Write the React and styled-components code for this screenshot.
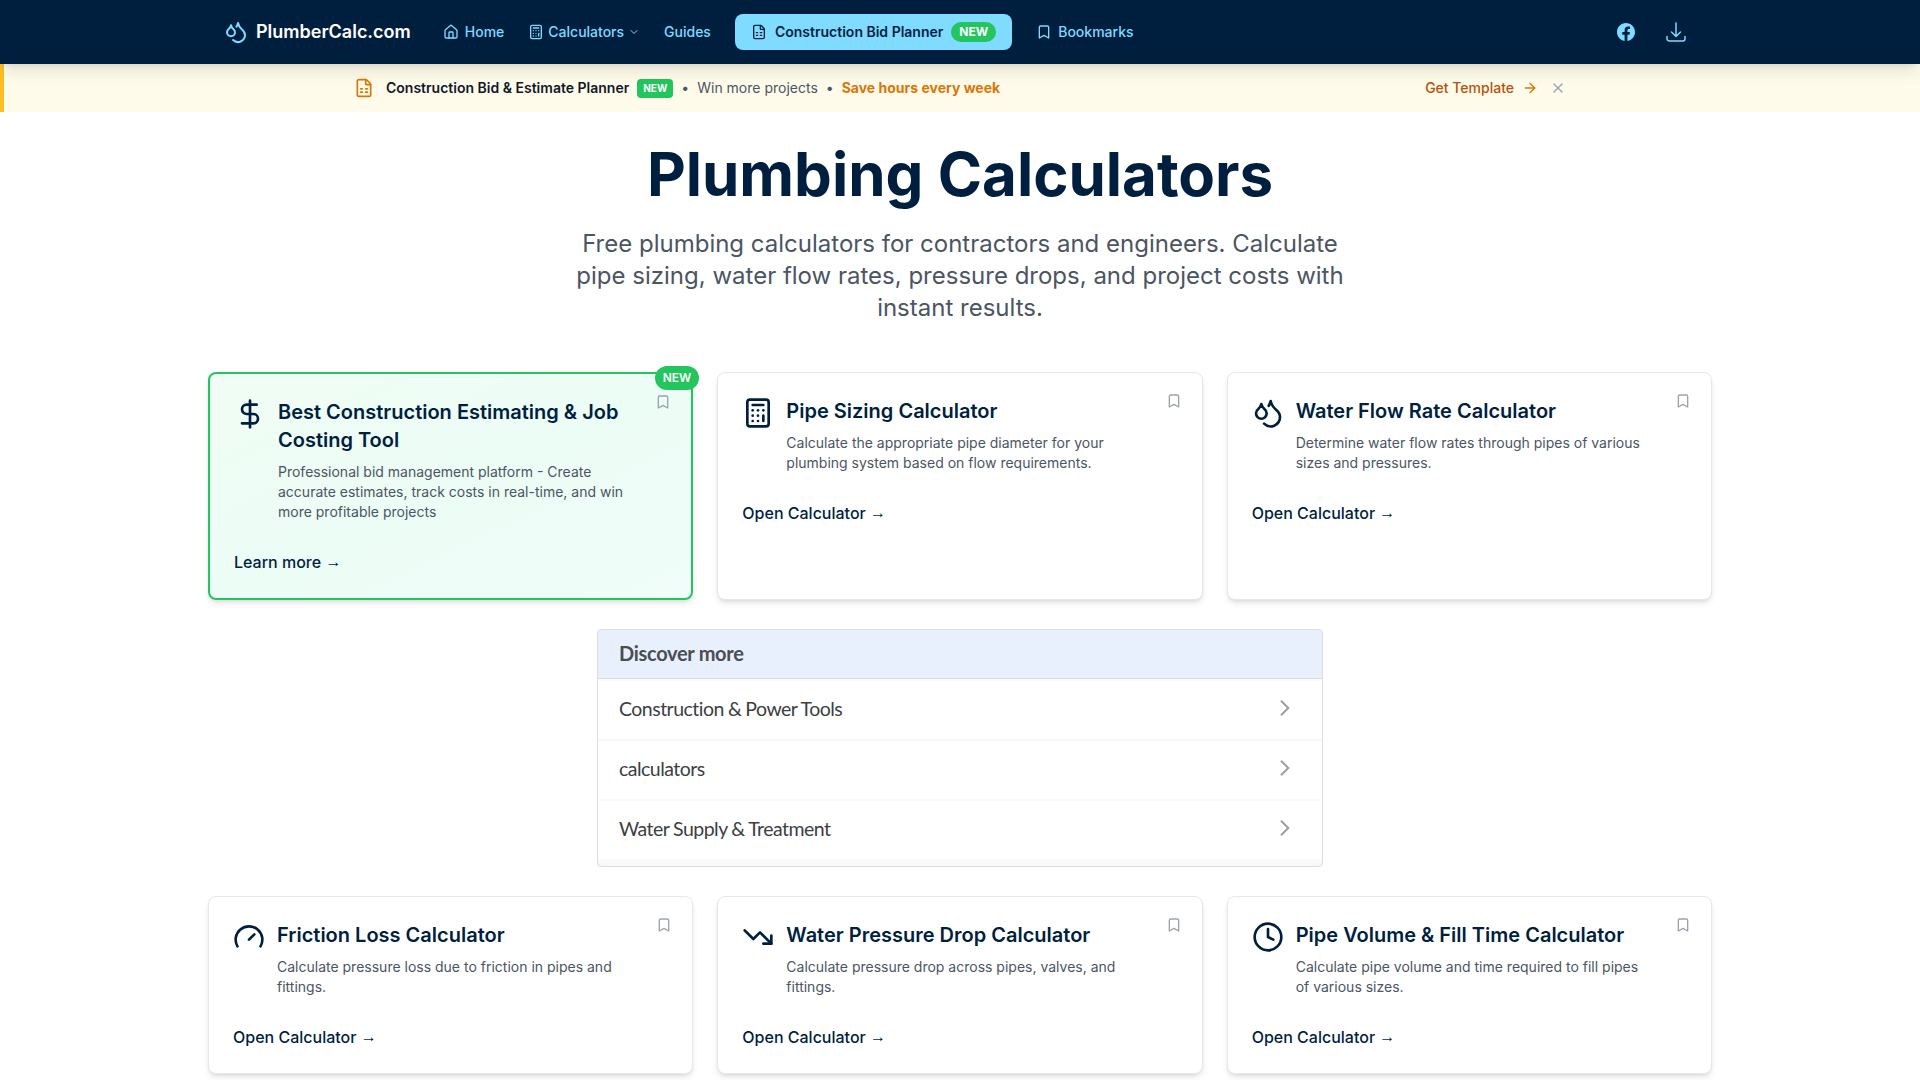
import styled, { createGlobalStyle } from "styled-components";
import {
  ArrowRight,
  Bookmark,
  Calculator,
  ChevronDown,
  Clock,
  DollarSign,
  Droplets,
  FileSpreadsheet,
  House,
  TrendingDown,
  X,
} from "lucide-react";

const GlobalStyle = createGlobalStyle`
  *, *::before, *::after {
    box-sizing: border-box;
  }

  body {
    margin: 0;
    background: #ffffff;
    font-family: Inter, "Liberation Sans", sans-serif;
    font-size: 16px;
    line-height: 24px;
    overflow: hidden;
  }

  h1, h2, h3, p {
    margin: 0;
  }

  svg {
    display: block;
    flex-shrink: 0;
  }
`;

const Header = styled.header`
  position: relative;
  z-index: 2;
  height: 64px;
  background: #001f3f;
  box-shadow: 0 10px 15px -3px rgba(0, 0, 0, 0.1), 0 4px 6px -4px rgba(0, 0, 0, 0.1);
`;

const HeaderInner = styled.div`
  width: 1536px;
  height: 100%;
  margin: 0 auto;
  padding: 0 40px 0 32px;
  display: flex;
  align-items: center;
  justify-content: space-between;
`;

const Nav = styled.nav`
  display: flex;
  align-items: center;
  gap: 24px;
`;

const Logo = styled.a`
  display: flex;
  align-items: center;
  gap: 8px;
  margin-right: 8px;
  color: #ffffff;
  font-size: 18px;
  font-weight: 600;
  line-height: 28px;

  svg {
    color: #7fdbff;
  }
`;

const NavLink = styled.a`
  display: flex;
  align-items: center;
  gap: ${(props) => props.$gap || "6px"};
  color: #7fdbff;
  font-size: 14px;
  font-weight: 500;
  line-height: 20px;
`;

const PlannerLink = styled.a`
  height: 36px;
  padding: 0 16px;
  display: flex;
  align-items: center;
  gap: 8px;
  border-radius: 8px;
  background: #7fdbff;
  color: #001f3f;
  font-size: 14px;
  font-weight: 600;
  line-height: 20px;
  box-shadow: 0 1px 2px rgba(0, 0, 0, 0.1);
`;

const NavBadge = styled.span`
  padding: 2px 8px;
  border-radius: 10px;
  background: #22c55e;
  color: #ffffff;
  font-size: 12px;
  font-weight: 700;
  line-height: 16px;
`;

const Social = styled.div`
  display: flex;
  align-items: center;
  gap: 29px;
  color: #7fdbff;
`;

const Banner = styled.div`
  height: 48px;
  border-left: 4px solid #fbbf24;
  background: #fffbeb;
`;

const BannerInner = styled.div`
  width: 1216px;
  height: 100%;
  margin: 0 auto;
  display: flex;
  align-items: center;
  justify-content: space-between;
  font-size: 14px;
  line-height: 20px;
`;

const BannerText = styled.div`
  display: flex;
  align-items: center;
  gap: 8px;
  color: #4b5563;

  svg {
    margin-right: 4px;
    color: #d97706;
  }
  strong {
    color: #111827;
    font-weight: 600;
  }
  em {
    color: #d97706;
    font-style: normal;
    font-weight: 700;
  }
`;

const BannerBadge = styled.span`
  padding: 2px 6px;
  border-radius: 4px;
  background: #22c55e;
  color: #ffffff;
  font-size: 10px;
  font-weight: 700;
  line-height: 15px;
`;

const BannerActions = styled.div`
  display: flex;
  align-items: center;
  gap: 12px;
  padding-right: 4px;
  color: #9ca3af;
`;

const TemplateLink = styled.a`
  display: flex;
  align-items: center;
  gap: 8px;
  color: #b45309;
  font-weight: 500;

  svg {
    color: #d97706;
  }
`;

const Main = styled.main`
  width: 1536px;
  margin: 0 auto;
  padding: 32px 16px;
`;

const Hero = styled.section`
  margin-bottom: 48px;
  text-align: center;
`;

const HeroTitle = styled.h1`
  margin-bottom: 24px;
  color: #001f3f;
  font-size: 60px;
  font-weight: 700;
  line-height: 60px;
`;

const HeroText = styled.p`
  width: 768px;
  margin: 0 auto;
  color: #4b5563;
  font-size: 24px;
  line-height: 32px;
`;

const CardGrid = styled.div`
  display: grid;
  grid-template-columns: repeat(3, 1fr);
  gap: 24px;
`;

const Card = styled.article`
  position: relative;
  padding: 24px;
  border: ${(props) => (props.$featured ? "2px solid #22c55e" : "1px solid #e5e7eb")};
  border-radius: 8px;
  background: ${(props) => (props.$featured ? "linear-gradient(to bottom right, #f0fdf4, #ecfdf5, #f0fdfa)" : "#ffffff")};
  box-shadow: 0 4px 6px -1px rgba(0, 0, 0, 0.1), 0 2px 4px -2px rgba(0, 0, 0, 0.1);
`;

const CardBadge = styled.span`
  position: absolute;
  top: -8px;
  right: -8px;
  padding: 4px 8px;
  border-radius: 12px;
  background: #22c55e;
  color: #ffffff;
  font-size: 12px;
  font-weight: 600;
  line-height: 16px;
`;

const CardBookmark = styled.span`
  position: absolute;
  top: 20px;
  right: 20px;
  color: #9ca3af;
`;

const CardHead = styled.div`
  display: flex;
  align-items: flex-start;
  gap: 12px;
  margin-bottom: 28px;
  padding-right: 32px;
  color: #001f3f;
`;

const CardTitle = styled.h3`
  margin-bottom: 8px;
  font-size: 20px;
  font-weight: 600;
  line-height: 28px;
`;

const CardText = styled.p`
  color: #4b5563;
  font-size: 14px;
  line-height: 20px;
`;

const CardLink = styled.a`
  display: block;
  height: 24px;
  color: #001f3f;
  font-weight: 500;
  line-height: 24px;
`;

const Arrow = styled.span`
  font-family: "Liberation Serif", serif;
  font-weight: 400;
  line-height: 1;
  vertical-align: 1px;
`;

const Discover = styled.section`
  width: 726px;
  height: 238px;
  margin: 29px auto;
  overflow: hidden;
  border: 1px solid #dadce0;
  border-radius: 4px;
  background: #f8f9fb;
  color: #3c4043;
  font-family: Lato, "Liberation Sans", sans-serif;
  font-size: 19.5px;
`;

const DiscoverTitle = styled.h2`
  height: 49px;
  padding: 0 21px 2px;
  display: flex;
  align-items: center;
  border-bottom: 1px solid #dadce0;
  background: #e8f0fe;
  color: #4a4d51;
  font-size: 20px;
  font-weight: 700;
  letter-spacing: -0.3px;
`;

const DiscoverRow = styled.div`
  height: 60px;
  padding: 0 32px 2px 21px;
  display: flex;
  align-items: center;
  justify-content: space-between;
  border-top: 2px solid #f8f9fb;
  background: #ffffff;
  letter-spacing: -0.52px;
  word-spacing: -0.4px;

  svg {
    margin-top: -2px;
  }
`;

const topCards = [
  {
    icon: DollarSign,
    title: "Best Construction Estimating & Job Costing Tool",
    text: "Professional bid management platform - Create accurate estimates, track costs in real-time, and win more profitable projects",
    link: "Learn more",
    featured: true,
  },
  {
    icon: Calculator,
    title: "Pipe Sizing Calculator",
    text: "Calculate the appropriate pipe diameter for your plumbing system based on flow requirements.",
  },
  {
    icon: Droplets,
    title: "Water Flow Rate Calculator",
    text: "Determine water flow rates through pipes of various sizes and pressures.",
  },
];

const bottomCards = [
  {
    icon: GaugeIcon,
    title: "Friction Loss Calculator",
    text: "Calculate pressure loss due to friction in pipes and fittings.",
  },
  {
    icon: TrendingDown,
    title: "Water Pressure Drop Calculator",
    text: "Calculate pressure drop across pipes, valves, and fittings.",
  },
  {
    icon: Clock,
    title: "Pipe Volume & Fill Time Calculator",
    text: "Calculate pipe volume and time required to fill pipes of various sizes.",
  },
];

const topics = ["Construction & Power Tools", "calculators", "Water Supply & Treatment"];

function GaugeIcon({ size }) {
  return (
    <svg width={size} height={size} viewBox="0 0 24 24" fill="none" stroke="currentColor" strokeWidth="2" strokeLinecap="round" strokeLinejoin="round">
      <path d="m12 14 4-4" />
      <path d="M3.34 19a10 10 0 1 1 17.32 0" />
    </svg>
  );
}

const FacebookIcon = () => (
  <svg width="18" height="18" viewBox="0 0 24 24" fill="currentColor">
    <path d="M24 12.073C24 5.405 18.627 0 12 0S0 5.405 0 12.073C0 18.1 4.388 23.094 10.125 24v-8.437H7.078v-3.49h3.047v-2.66c0-3.025 1.792-4.697 4.533-4.697 1.312 0 2.686.236 2.686.236v2.971H15.83c-1.491 0-1.956.93-1.956 1.886v2.264h3.328l-.532 3.49h-2.796V24C19.612 23.094 24 18.1 24 12.073z" />
  </svg>
);

const DownloadIcon = () => (
  <svg width="24" height="24" viewBox="0 0 24 24" fill="none" stroke="currentColor" strokeWidth="1.5" strokeLinecap="round" strokeLinejoin="round">
    <path d="M3 16.5v2.25A2.25 2.25 0 0 0 5.25 21h13.5A2.25 2.25 0 0 0 21 18.75V16.5M16.5 12 12 16.5m0 0L7.5 12m4.5 4.5V3" />
  </svg>
);

const RowChevron = () => (
  <svg width="10" height="16" viewBox="0 0 10 16" fill="none" stroke="#9aa0a6" strokeWidth="2">
    <path d="M1 0.7l7.3 7.3-7.3 7.3" />
  </svg>
);

const CalculatorCard = ({ card }) => {
  const Icon = card.icon;

  return (
    <Card $featured={card.featured}>
      {card.featured ? <CardBadge>NEW</CardBadge> : null}
      <CardBookmark>
        <Bookmark size={16} />
      </CardBookmark>
      <CardHead>
        <Icon size={32} />
        <div>
          <CardTitle>{card.title}</CardTitle>
          <CardText>{card.text}</CardText>
        </div>
      </CardHead>
      <CardLink>
        {card.link ? card.link : "Open Calculator"} <Arrow>→</Arrow>
      </CardLink>
    </Card>
  );
};

export default function App() {
  return (
    <>
      <GlobalStyle />
      <Header>
        <HeaderInner>
          <Nav>
            <Logo>
              <Droplets size={24} />
              <span>PlumberCalc.com</span>
            </Logo>
            <NavLink>
              <House size={16} />
              <span>Home</span>
            </NavLink>
            <NavLink $gap={"4px"}>
              <Calculator size={16} />
              <span>Calculators</span>
              <ChevronDown size={12} />
            </NavLink>
            <NavLink>
              <span>Guides</span>
            </NavLink>
            <PlannerLink>
              <FileSpreadsheet size={16} />
              <span>Construction Bid Planner</span>
              <NavBadge>NEW</NavBadge>
            </PlannerLink>
            <NavLink>
              <Bookmark size={16} />
              <span>Bookmarks</span>
            </NavLink>
          </Nav>
          <Social>
            <FacebookIcon />
            <DownloadIcon />
          </Social>
        </HeaderInner>
      </Header>
      <Banner>
        <BannerInner>
          <BannerText>
            <FileSpreadsheet size={20} />
            <strong>Construction Bid &amp; Estimate Planner</strong>
            <BannerBadge>NEW</BannerBadge>
            <span>•</span>
            <span>Win more projects</span>
            <span>•</span>
            <em>Save hours every week</em>
          </BannerText>
          <BannerActions>
            <TemplateLink>
              <span>Get Template</span>
              <ArrowRight size={16} />
            </TemplateLink>
            <X size={16} />
          </BannerActions>
        </BannerInner>
      </Banner>
      <Main>
        <Hero>
          <HeroTitle>Plumbing Calculators</HeroTitle>
          <HeroText>
            Free plumbing calculators for contractors and engineers. Calculate pipe sizing, water flow rates, pressure drops, and project costs with
            instant results.
          </HeroText>
        </Hero>
        <CardGrid>
          {topCards.map((card) => (
            <CalculatorCard key={card.title} card={card} />
          ))}
        </CardGrid>
        <Discover>
          <DiscoverTitle>Discover more</DiscoverTitle>
          {topics.map((topic) => (
            <DiscoverRow key={topic}>
              <span>{topic}</span>
              <RowChevron />
            </DiscoverRow>
          ))}
        </Discover>
        <CardGrid>
          {bottomCards.map((card) => (
            <CalculatorCard key={card.title} card={card} />
          ))}
        </CardGrid>
      </Main>
    </>
  );
}
